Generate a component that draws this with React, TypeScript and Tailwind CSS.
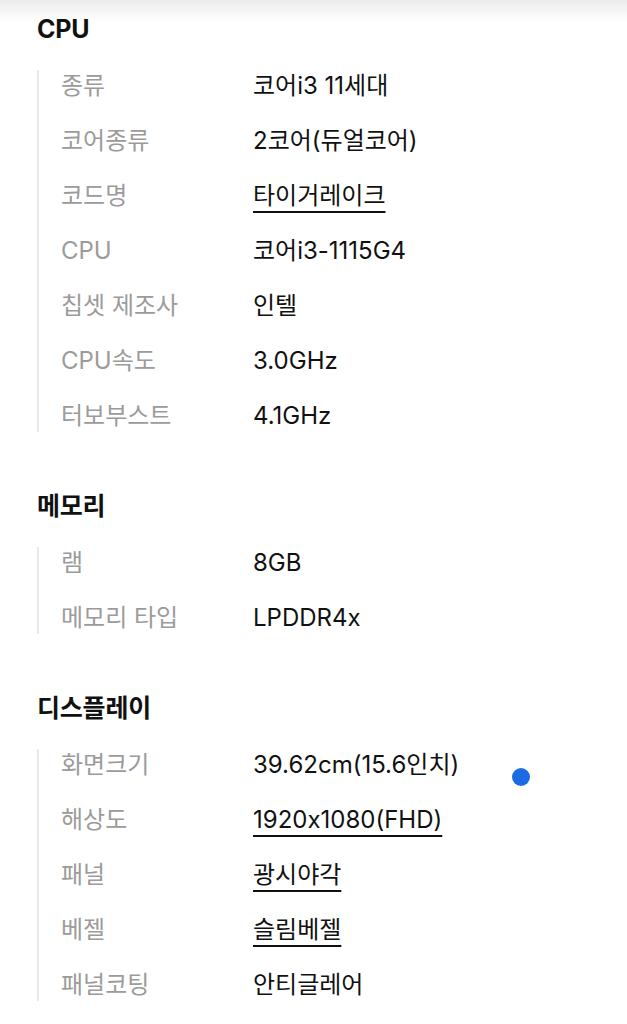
type Spec = {
  label: string;
  value: string;
  link?: boolean;
};

type Section = {
  title: string;
  rows: Spec[];
};

const sections: Section[] = [
  {
    title: "CPU",
    rows: [
      { label: "종류", value: "코어i3 11세대" },
      { label: "코어종류", value: "2코어(듀얼코어)" },
      { label: "코드명", value: "타이거레이크", link: true },
      { label: "CPU", value: "코어i3-1115G4" },
      { label: "칩셋 제조사", value: "인텔" },
      { label: "CPU속도", value: "3.0GHz" },
      { label: "터보부스트", value: "4.1GHz" },
    ],
  },
  {
    title: "메모리",
    rows: [
      { label: "램", value: "8GB" },
      { label: "메모리 타입", value: "LPDDR4x" },
    ],
  },
  {
    title: "디스플레이",
    rows: [
      { label: "화면크기", value: "39.62cm(15.6인치)" },
      { label: "해상도", value: "1920x1080(FHD)", link: true },
      { label: "패널", value: "광시야각", link: true },
      { label: "베젤", value: "슬림베젤", link: true },
      { label: "패널코팅", value: "안티글레어" },
    ],
  },
];

const SpecSection = ({ title, rows }: Section) => {
  return (
    <section>
      <h2 className="text-[25px] leading-[32px] font-bold text-[#111] tracking-[-0.2px]">{title}</h2>
      <ul className="mt-[25px] flex flex-col gap-[23px] border-l-2 border-[#e9e9e9] pl-[22px]">
        {rows.map((row) => (
          <li key={row.label} className="flex h-[32px] items-center text-[24px] leading-[32px]">
            <span className="w-[192px] shrink-0 text-[#9b9b9b]">{row.label}</span>
            {row.link ? (
              <span className="text-[#111] underline decoration-[1.5px] underline-offset-[7px]">{row.value}</span>
            ) : (
              <span className="text-[#111]">{row.value}</span>
            )}
          </li>
        ))}
      </ul>
    </section>
  );
};

const App = () => {
  return (
    <div
      className="relative min-h-[1024px] bg-[linear-gradient(to_bottom,#ececec_0px,#ffffff_22px)] px-[37px] pt-[13px] [font-feature-settings:'calt'_0]"
      style={{ fontFamily: 'Inter, "Noto Sans CJK KR", sans-serif' }}
    >
      <div className="flex flex-col gap-[58px]">
        {sections.map((s) => (
          <SpecSection key={s.title} title={s.title} rows={s.rows} />
        ))}
      </div>
      {/* touch indicator */}
      <div className="absolute left-[512px] top-[768px] h-[18px] w-[18px] rounded-full bg-[#1b6ce2]" />
    </div>
  );
};

export default App;
